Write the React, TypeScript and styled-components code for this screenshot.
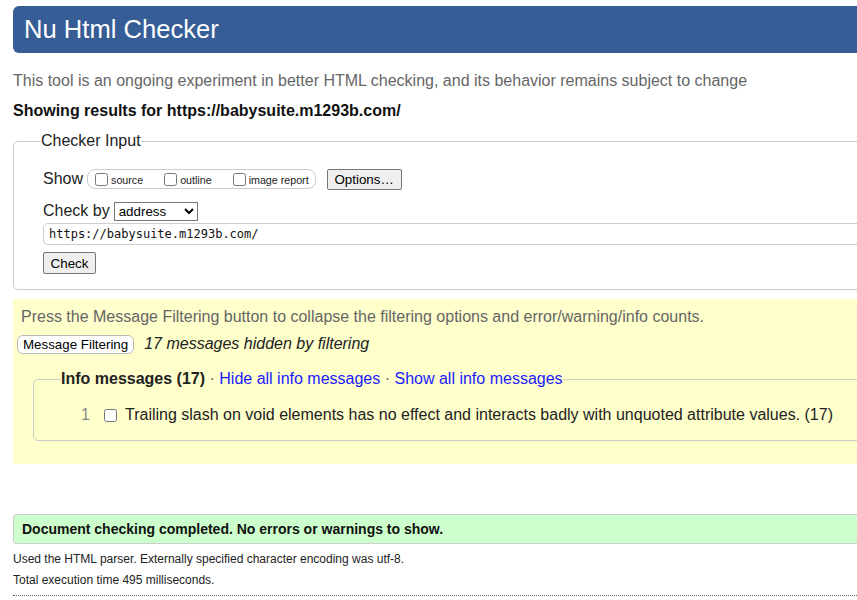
import React from "react";
import styled, { createGlobalStyle } from "styled-components";

const Global = createGlobalStyle`
  html, body { margin: 0; padding: 0; overflow: hidden; background: #fff; }
  body { font-family: "Liberation Sans", Arial, sans-serif; color: #222; }
`;

const Page = styled.div`
  width: 900px;
  padding: 6px 0 0 13px;
`;

const Header = styled.h1`
  margin: 0;
  height: 47px;
  background: #365d95;
  border-radius: 6px 0 0 6px;
  color: #fff;
  font-weight: normal;
  font-size: 25.6px;
  line-height: 46px;
  padding-left: 11px;
`;

const Intro = styled.p`
  margin: 19px 0 0;
  font-size: 16px;
  line-height: 18px;
  color: #666;
`;

const Showing = styled.p`
  margin: 12px 0 0;
  font-size: 16px;
  line-height: 18px;
  font-weight: bold;
  color: #111;
`;

const Fieldset = styled.fieldset`
  margin: 12px 0 0;
  border: 1px solid #ccc;
  border-radius: 5px 0 0 5px;
  padding: 18px 0 15px 27px;
  min-width: 0;
`;

const Legend = styled.legend`
  padding: 0;
  font-size: 16px;
  line-height: 18px;
  color: #222;
`;

const Content = styled.div`
  padding-left: 2px;
`;

const Row = styled.div<{ $mt?: number }>`
  display: flex;
  align-items: center;
  height: 22px;
  margin-top: ${(p) => p.$mt ?? 0}px;
  font-size: 16px;
`;

const ShowBox = styled.div`
  display: inline-flex;
  align-items: center;
  gap: 21px;
  height: 18px;
  margin-left: 4px;
  padding: 0 6px 0 7px;
  border: 1px solid #ccc;
  border-radius: 8px;
`;

const SmallLabel = styled.label`
  display: inline-flex;
  align-items: center;
  gap: 3px;
  font-size: 10.7px;
  color: #222;
  padding-top: 1px;
`;

const Check = styled.input.attrs({ type: "checkbox" })`
  margin: 0;
  width: 13px;
  height: 13px;
`;

const Button = styled.button<{ $w?: number; $h?: number; $round?: boolean; $bg?: string }>`
  font-family: "Liberation Sans", Arial, sans-serif;
  font-size: 13.33px;
  color: #000;
  white-space: nowrap;
  height: ${(p) => p.$h ?? 21}px;
  width: ${(p) => (p.$w ? `${p.$w}px` : "auto")};
  padding: 0 6px;
  background: ${(p) => p.$bg ?? "#efefef"};
  border: 1px solid #767676;
  border-radius: ${(p) => (p.$round ? 6 : 2)}px;
`;

const Select = styled.select`
  font-family: "Liberation Sans", Arial, sans-serif;
  font-size: 13.33px;
  width: 84px;
  height: 19px;
  margin-left: 4px;
  padding: 0;
  border: 1px solid #767676;
  border-radius: 0;
  background: #fff;
  color: #000;
`;

const UrlInput = styled.input`
  display: block;
  box-sizing: border-box;
  width: 850px;
  height: 22px;
  margin-top: 1px;
  padding: 0 5px;
  border: 1px solid #ccc;
  border-radius: 5px 0 0 5px;
  font-family: "DejaVu Sans Mono", "Liberation Mono", monospace;
  font-size: 12px;
  color: #111;
`;

const Filters = styled.div`
  margin-top: 9px;
  background: #ffffcc;
  padding: 9px 0 23px 0;
`;

const FilterNote = styled.p`
  margin: 0;
  padding-left: 8px;
  font-size: 16px;
  line-height: 18px;
  color: #666;
`;

const FilterRow = styled.div`
  display: flex;
  align-items: center;
  gap: 10px;
  height: 20px;
  margin-top: 8px;
  padding-left: 4px;
`;

const Hidden = styled.em`
  font-size: 16px;
  color: #222;
`;

const InfoFieldset = styled.fieldset`
  margin: 16px 0 0 20px;
  border: 1px solid #ccc;
  border-radius: 5px 0 0 5px;
  padding: 18px 0 16px 0;
  min-width: 0;
`;

const InfoLegend = styled.legend`
  margin-left: 27px;
  padding: 0;
  font-size: 16px;
  line-height: 18px;
  color: #666;
`;

const Strong = styled.strong`
  color: #222;
`;

const Link = styled.a`
  color: #1a1aff;
  text-decoration: none;
`;

const MsgRow = styled.div`
  display: flex;
  align-items: center;
  height: 18px;
  font-size: 16px;
`;

const MsgNum = styled.span`
  width: 56px;
  text-align: right;
  color: #888;
`;

const MsgCheck = styled(Check)`
  margin-left: 14px;
`;

const MsgText = styled.span`
  margin-left: 8px;
  color: #222;
`;

const Success = styled.p`
  margin: 50px 0 0;
  background: #ccffcc;
  border: 1px solid #ccc;
  border-right: none;
  border-radius: 4px 0 0 4px;
  padding: 0 8px;
  height: 28px;
  line-height: 28px;
  font-size: 14px;
  font-weight: bold;
  color: #111;
`;

const Detail = styled.p<{ $mt: number }>`
  margin: ${(p) => p.$mt}px 0 0;
  font-size: 12px;
  line-height: 14px;
  color: #222;
`;

const Dotted = styled.hr`
  margin: 8px 0 0;
  border: none;
  border-top: 1px dotted #666;
  height: 0;
`;

export default function App() {
  return (
    <Page>
      <Global />
      <Header>Nu Html Checker</Header>
      <Intro>
        This tool is an ongoing experiment in better HTML checking, and its behavior remains subject to change
      </Intro>
      <Showing>Showing results for https://babysuite.m1293b.com/</Showing>

      <Fieldset>
        <Legend>Checker Input</Legend>
        <Content>
          <Row>
            Show
            <ShowBox>
              <SmallLabel>
                <Check />
                source
              </SmallLabel>
              <SmallLabel>
                <Check />
                outline
              </SmallLabel>
              <SmallLabel>
                <Check />
                image report
              </SmallLabel>
            </ShowBox>
            <Button style={{ marginLeft: 11 }} $w={75}>
              Options…
            </Button>
          </Row>
          <Row $mt={10}>
            Check by
            <Select defaultValue="address">
              <option value="address">address</option>
              <option value="file">file upload</option>
              <option value="text">text input</option>
            </Select>
          </Row>
          <UrlInput defaultValue="https://babysuite.m1293b.com/" />
          <Row $mt={7}>
            <Button $w={53} $h={22}>
              Check
            </Button>
          </Row>
        </Content>
      </Fieldset>

      <Filters>
        <FilterNote>
          Press the Message Filtering button to collapse the filtering options and error/warning/info counts.
        </FilterNote>
        <FilterRow>
          <Button $h={19} $round $bg="#fff" style={{ borderColor: "#bbb", padding: "0 5px" }}>
            Message Filtering
          </Button>
          <Hidden>17 messages hidden by filtering</Hidden>
        </FilterRow>
        <InfoFieldset>
          <InfoLegend>
            <Strong>Info messages (17)</Strong> · <Link href="#">Hide all info messages</Link> ·{" "}
            <Link href="#">Show all info messages</Link>
          </InfoLegend>
          <MsgRow>
            <MsgNum>1</MsgNum>
            <MsgCheck />
            <MsgText>
              Trailing slash on void elements has no effect and interacts badly with unquoted attribute values. (17)
            </MsgText>
          </MsgRow>
        </InfoFieldset>
      </Filters>

      <Success>Document checking completed. No errors or warnings to show.</Success>
      <Detail $mt={8}>Used the HTML parser. Externally specified character encoding was utf-8.</Detail>
      <Detail $mt={7}>Total execution time 495 milliseconds.</Detail>
      <Dotted />
    </Page>
  );
}
